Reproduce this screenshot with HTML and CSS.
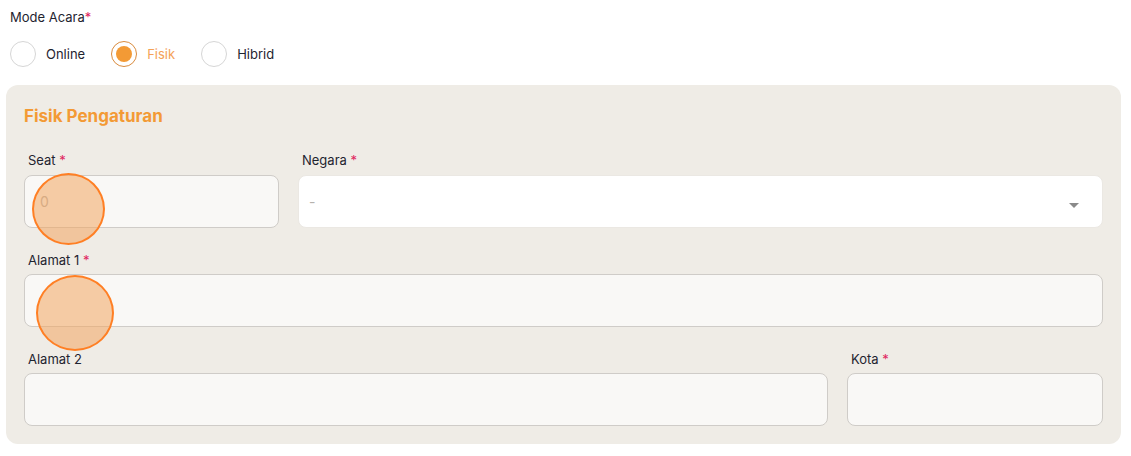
FILE: index.html
```html
<!DOCTYPE html>
<html>
<head>
<meta charset="utf-8">
<link rel="stylesheet" href="styles.css">
</head>
<body>
<div class="page">
  <div class="mode">
    <div class="mode-label">Mode Acara<span class="req">*</span></div>
    <div class="radios">
      <label class="radio"><span class="dot"></span><span>Online</span></label>
      <label class="radio active"><span class="dot"></span><span>Fisik</span></label>
      <label class="radio"><span class="dot"></span><span>Hibrid</span></label>
    </div>
  </div>
  <section class="panel">
    <h2 class="title">Fisik Pengaturan</h2>
    <div class="row row-a">
      <div class="field">
        <div class="label">Seat <span class="req">*</span></div>
        <div class="input"><span class="ph">0</span></div>
      </div>
      <div class="field">
        <div class="label">Negara <span class="req">*</span></div>
        <div class="input select"><span class="ph dash">-</span><span class="caret"></span></div>
      </div>
    </div>
    <div class="row">
      <div class="field">
        <div class="label">Alamat 1 <span class="req">*</span></div>
        <div class="input"></div>
      </div>
    </div>
    <div class="row row-b">
      <div class="field">
        <div class="label">Alamat 2</div>
        <div class="input"></div>
      </div>
      <div class="field">
        <div class="label">Kota <span class="req">*</span></div>
        <div class="input"></div>
      </div>
    </div>
    <span class="touch t1"></span>
    <span class="touch t2"></span>
  </section>
</div>
</body>
</html>
```
FILE: styles.css
```css
* { box-sizing: border-box; }
html, body { margin: 0; padding: 0; background: #fff; }
body {
  font-family: Inter, "Noto Sans", sans-serif;
  font-size: 13px;
  color: #1f2430;
}
.page { padding: 9px 10px 0 6px; }
.mode { padding-left: 4px; }
.mode-label { line-height: 17px; }
.req { color: #e0245e; }
.radios { display: flex; margin-top: 15px; height: 26px; align-items: center; }
.radio { display: flex; align-items: center; gap: 10px; margin-right: 26px; }
.radio .dot {
  width: 26px; height: 26px; border-radius: 50%;
  border: 1px solid #d6d6d6; background: #fff;
  display: flex; align-items: center; justify-content: center;
}
.radio.active .dot { border-color: #d98b3e; }
.radio.active .dot::after {
  content: ""; width: 16px; height: 16px; border-radius: 50%; background: #f39a35;
}
.radio.active { color: #f4a257; }
.panel {
  position: relative;
  margin-top: 18px;
  background: #efece6;
  border-radius: 12px;
  padding: 18px;
}
.title {
  margin: 0; font-size: 17px; font-weight: 700; color: #f39a35; line-height: 26px;
}
.row { display: grid; grid-template-columns: 1fr; gap: 19px; margin-top: 23px; }
.row-a { grid-template-columns: 255px 1fr; margin-top: 22px; }
.row-b { grid-template-columns: 1fr 256px; }
.label { line-height: 18px; padding-left: 4px; margin-bottom: 5px; font-size: 13px; }
.row-a .label { margin-bottom: 6px; }
.input {
  height: 53px; border: 1px solid #cfccc8; border-radius: 8px; background: #f9f8f6;
  display: flex; align-items: center; padding: 0 15px;
}
.ph { color: #b5b2ad; font-size: 14px; }
.select { background: #fff; border-color: #ebe8e3; padding: 0 10px; justify-content: space-between; }
.caret {
  width: 0; height: 0; border-left: 5px solid transparent; border-right: 5px solid transparent;
  border-top: 5px solid #8a8a8a; margin-top: 7px; margin-right: 13px;
}
.touch {
  position: absolute; border-radius: 50%;
  background: rgba(243, 166, 96, 0.55); border: 2px solid #ff7f24;
}
.t1 { left: 26px; top: 88px; width: 73px; height: 72px; }
.t2 { left: 30px; top: 190px; width: 78px; height: 76px; }
```
